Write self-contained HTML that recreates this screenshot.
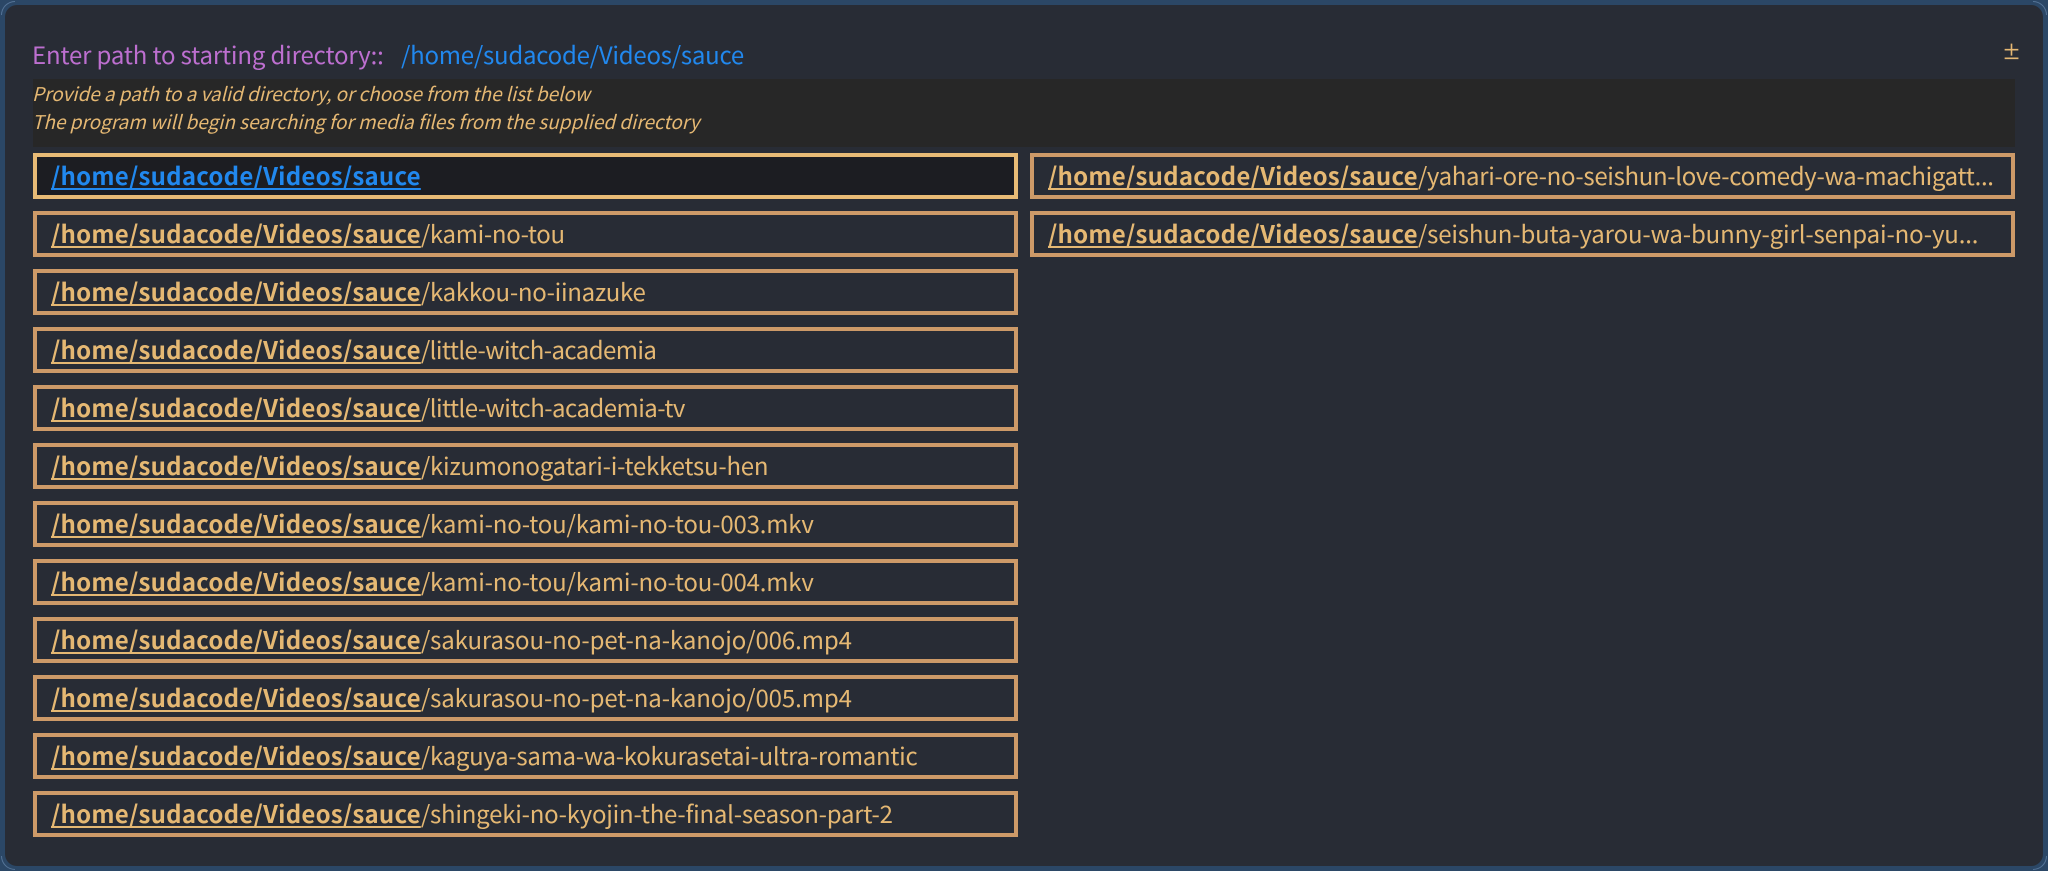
<!DOCTYPE html>
<html><head><meta charset="utf-8"><style>
*{box-sizing:border-box;margin:0;padding:0}
html,body{width:2048px;height:871px;overflow:hidden;background:#2b4766}
body{font-family:"Noto Sans CJK JP","DejaVu Sans",sans-serif;position:relative}
.win{position:absolute;left:5px;top:5px;width:2038px;height:861px;background:#282c35;border-radius:12px}
.abs{position:absolute;white-space:nowrap}
.label{left:32px;top:38px;font-size:24px;line-height:32px;color:#bd6fd0;letter-spacing:-.15px}
.val{left:401px;top:38px;font-size:24px;line-height:32px;color:#2188ee;letter-spacing:-.24px}
.pm{left:2002px;top:39px;font-size:19px;line-height:26px;color:#e5b873;font-weight:500}
.help{position:absolute;left:33px;top:79px;width:1982px;height:68px;background:#272727}
.help div{position:absolute;left:-1px;font-style:italic;font-size:19px;line-height:28px;color:#e5b873;white-space:nowrap;letter-spacing:-.02px}
.it{position:absolute;width:985px;height:46px;border:4px solid #cd9a68;font-size:24px;line-height:36px;padding-left:14px;color:#e5b873;white-space:nowrap;overflow:hidden;letter-spacing:-.22px}
.it b{font-weight:700;letter-spacing:.24px;text-decoration:underline;text-decoration-thickness:2px;text-underline-offset:3px}
.it.a{border-color:#e8bb76;background:#1c1d22;color:#2188ee}
.c{position:absolute;width:14px;height:14px;border:0 solid #557497}
</style></head><body>
<div class="win"></div>
<div class="c" style="left:1px;top:1px;border-width:1px 0 0 1px;border-top-left-radius:14px"></div>
<div class="c" style="right:1px;top:1px;border-width:1px 1px 0 0;border-top-right-radius:14px"></div>
<div class="c" style="left:1px;bottom:1px;border-width:0 0 1px 1px;border-bottom-left-radius:14px"></div>
<div class="c" style="right:1px;bottom:1px;border-width:0 1px 1px 0;border-bottom-right-radius:14px"></div>
<div class="abs label">Enter path to starting directory::</div>
<div class="abs val">/home/sudacode/Videos/sauce</div>
<div class="abs pm">±</div>
<div class="help"><div style="top:1px;letter-spacing:-.06px">Provide a path to a valid directory, or choose from the list below</div><div style="top:29px">The program will begin searching for media files from the supplied directory</div></div>
<div class="it a" style="left:33px;top:153px"><b>/home/sudacode/Videos/sauce</b></div>
<div class="it" style="left:33px;top:211px"><b>/home/sudacode/Videos/sauce</b><span style="letter-spacing:-.33px">/kami-no-tou</span></div>
<div class="it" style="left:33px;top:269px"><b>/home/sudacode/Videos/sauce</b><span style="letter-spacing:-.29px">/kakkou-no-iinazuke</span></div>
<div class="it" style="left:33px;top:327px"><b>/home/sudacode/Videos/sauce</b><span style="letter-spacing:-.58px">/little-witch-academia</span></div>
<div class="it" style="left:33px;top:385px"><b>/home/sudacode/Videos/sauce</b><span style="letter-spacing:-.54px">/little-witch-academia-tv</span></div>
<div class="it" style="left:33px;top:443px"><b>/home/sudacode/Videos/sauce</b>/kizumonogatari-i-tekketsu-hen</div>
<div class="it" style="left:33px;top:501px"><b>/home/sudacode/Videos/sauce</b><span style="letter-spacing:-.18px">/kami-no-tou/kami-no-tou-003.mkv</span></div>
<div class="it" style="left:33px;top:559px"><b>/home/sudacode/Videos/sauce</b><span style="letter-spacing:-.18px">/kami-no-tou/kami-no-tou-004.mkv</span></div>
<div class="it" style="left:33px;top:617px"><b>/home/sudacode/Videos/sauce</b><span style="letter-spacing:-.1px">/sakurasou-no-pet-na-kanojo/006.mp4</span></div>
<div class="it" style="left:33px;top:675px"><b>/home/sudacode/Videos/sauce</b><span style="letter-spacing:-.1px">/sakurasou-no-pet-na-kanojo/005.mp4</span></div>
<div class="it" style="left:33px;top:733px"><b>/home/sudacode/Videos/sauce</b><span style="letter-spacing:-.28px">/kaguya-sama-wa-kokurasetai-ultra-romantic</span></div>
<div class="it" style="left:33px;top:791px"><b>/home/sudacode/Videos/sauce</b>/shingeki-no-kyojin-the-final-season-part-2</div>
<div class="it" style="left:1030px;top:153px"><b>/home/sudacode/Videos/sauce</b><span style="letter-spacing:-.32px">/yahari-ore-no-seishun-love-comedy-wa-machigatt...</span></div>
<div class="it" style="left:1030px;top:211px"><b>/home/sudacode/Videos/sauce</b><span style="letter-spacing:-.14px">/seishun-buta-yarou-wa-bunny-girl-senpai-no-yu...</span></div>
</body></html>
